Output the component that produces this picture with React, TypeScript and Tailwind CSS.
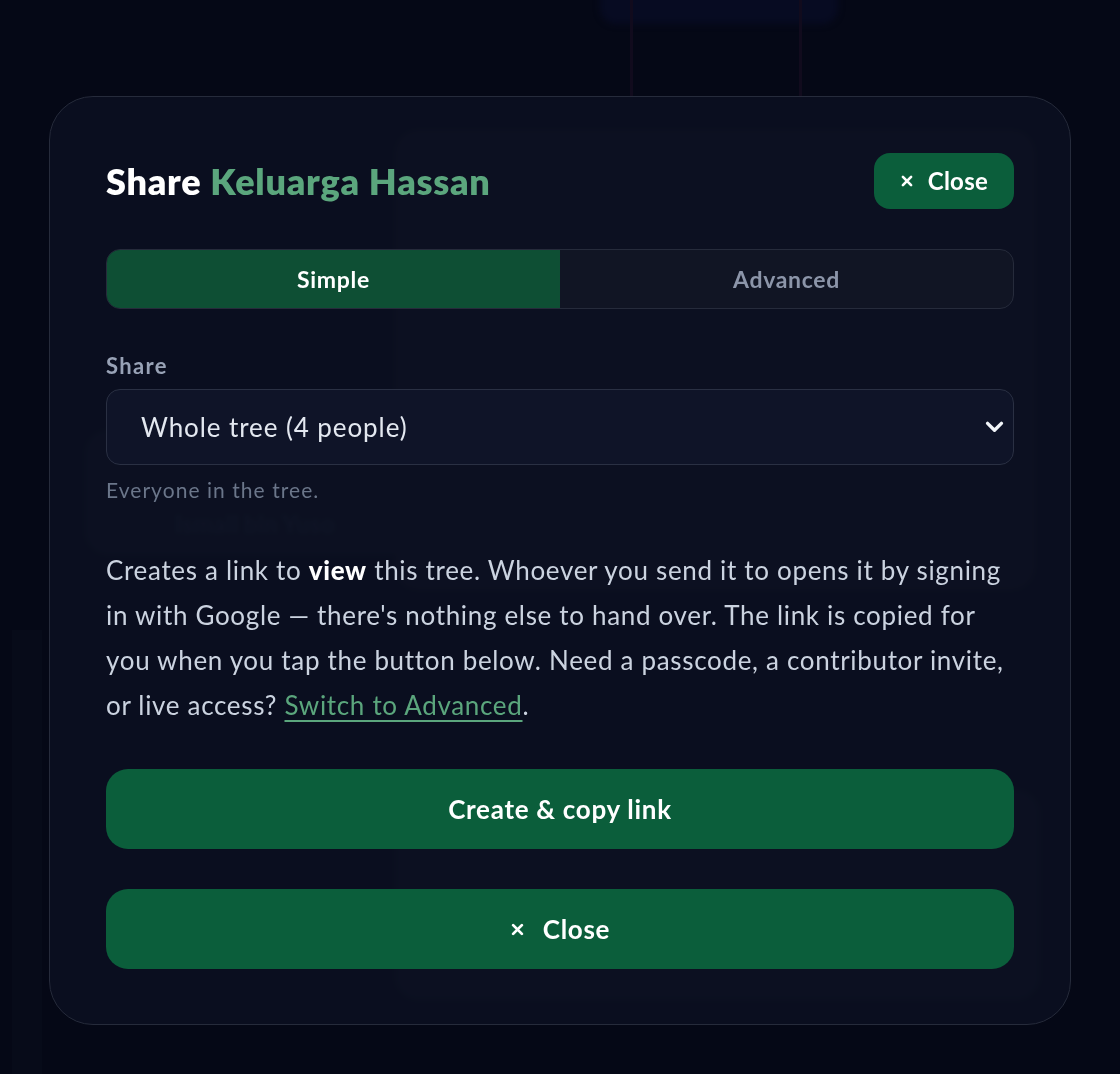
import React from 'react';

const XIcon = ({ className = '' }: { className?: string }) => (
  <svg viewBox="0 0 24 24" className={className} fill="none" stroke="currentColor" strokeWidth={4.5} strokeLinecap="round">
    <path d="M5 5l14 14M19 5L5 19" />
  </svg>
);

const ChevronDown = () => (
  <svg viewBox="0 0 20 13" className="w-[19px] h-[12px] text-slate-100" fill="none" stroke="currentColor" strokeWidth={3.6} strokeLinecap="round" strokeLinejoin="round">
    <path d="M2.5 2.5l7.5 7.5 7.5-7.5" />
  </svg>
);

const App = () => {
  return (
    <div
      className="relative h-[1074px] w-full overflow-hidden bg-[#050816] text-slate-200"
      style={{ fontFamily: 'Lato, "Noto Sans", sans-serif' }}
    >
      {/* Tree canvas behind the modal */}
      <div className="absolute left-[600px] top-[-20px] w-[238px] h-[44px] rounded-2xl bg-[#070b22] blur-[3px]" />
      <div className="absolute left-[630px] top-0 w-[3px] h-[100px] bg-[#110b1d]" />
      <div className="absolute left-[799px] top-0 w-[3px] h-[100px] bg-[#110b1d]" />
      <div className="absolute left-[12px] top-[630px] w-[30px] h-[444px] bg-[#070b19]" />
      <div className="absolute left-[85px] top-[430px] w-[330px] h-[125px] rounded-3xl bg-[#151b2b] overflow-hidden">
        <span className="absolute left-[90px] top-[76px] w-[160px] overflow-hidden whitespace-nowrap text-[24px] font-extrabold text-[#323c52]">Ismail bin Yusof</span>
      </div>
      <div className="absolute left-[395px] top-[130px] w-[640px] h-[460px] rounded-3xl bg-[#1a1829]" />
      <div className="absolute left-[395px] top-[790px] w-[645px] h-[210px] rounded-3xl bg-[#141a2a]" />

      {/* Modal */}
      <div className="relative pt-[96px] px-[49px]">
        <div className="rounded-[44px] border border-[#262b3b] bg-[#0b1020]/90 backdrop-blur-[2px] px-[56px] pt-[56px] pb-[55px]">
          <div className="flex items-center justify-between">
            <h2 className="text-[36px] leading-[48px] font-extrabold tracking-[0.02em] text-white">
              Share <span className="text-[#5ba67d]">Keluarga Hassan</span>
            </h2>
            <button className="flex items-center gap-[14px] h-[56px] px-[26px] rounded-2xl bg-[#0b5e3b] text-white text-[24px] font-bold tracking-[0.01em]">
              <XIcon className="w-[14px] h-[14px]" />
              Close
            </button>
          </div>

          <div className="mt-[40px] grid grid-cols-2 h-[60px] rounded-[14px] border border-[#262b3b] overflow-hidden bg-[#111524]">
            <button className="bg-[#0e4f34] text-white text-[23px] font-bold tracking-[0.03em]">Simple</button>
            <button className="text-[#8c95a9] text-[23px] font-bold tracking-[0.03em]">Advanced</button>
          </div>

          <div className="mt-[42px] text-[22px] leading-[30px] font-bold tracking-[0.06em] text-[#98a2b6]">Share</div>
          <div className="mt-[8px] h-[76px] rounded-[14px] border border-[#2a3043] bg-[#0f1428] flex items-center justify-between pl-[34px] pr-[9px]">
            <span className="text-[26px] tracking-[0.035em] text-[#e3e8f0]">Whole tree (4 people)</span>
            <ChevronDown />
          </div>
          <p className="mt-[10px] text-[21px] leading-[30px] tracking-[0.05em] text-[#6b768a]">Everyone in the tree.</p>

          <p className="mt-[43px] text-[26px] leading-[45px] tracking-[0.026em] text-[#cbd3e0]">
            Creates a link to <strong className="font-black text-white">view</strong> this tree. Whoever you send it to opens it by signing in with Google — there's nothing else to hand over. The link is copied for you when you tap the button below. Need a passcode, a contributor invite, or live access?{' '}
            <a className="text-[#5ba67d] underline underline-offset-[5px] decoration-[1.5px]">Switch to Advanced</a>.
          </p>

          <button className="mt-[41px] w-full h-[80px] rounded-[22px] bg-[#0b5e3b] text-white text-[26px] font-bold tracking-[0.027em]">
            Create &amp; copy link
          </button>
          <button className="mt-[40px] w-full h-[80px] rounded-[22px] bg-[#0b5e3b] text-white text-[26px] font-bold tracking-[0.027em] flex items-center justify-center gap-[18px]">
            <XIcon className="w-[15px] h-[15px]" />
            Close
          </button>
        </div>
      </div>
    </div>
  );
};

export default App;
